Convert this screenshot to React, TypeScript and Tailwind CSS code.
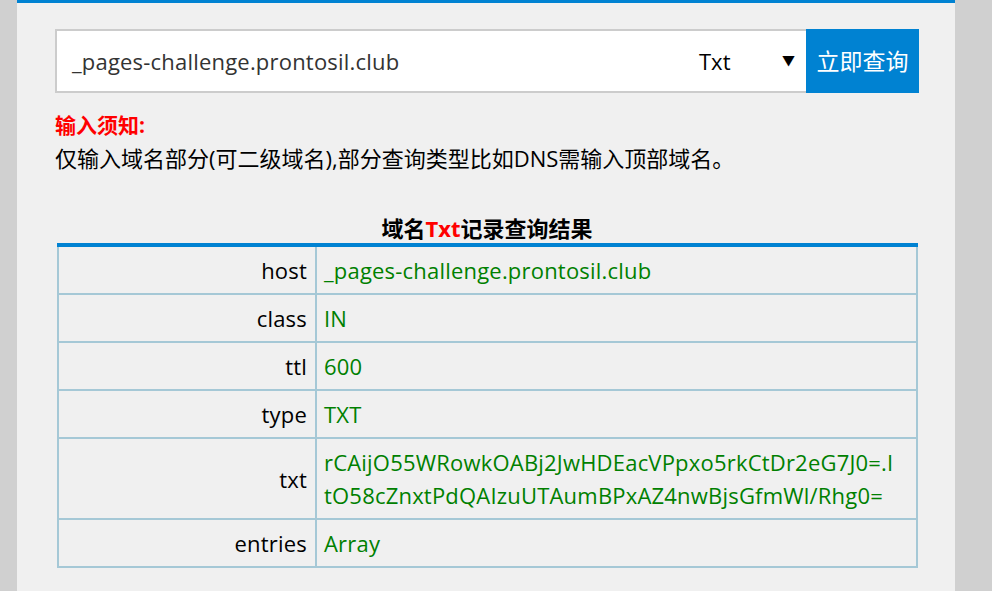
import React from 'react';

const rows: [string, React.ReactNode][] = [
    ['host', '_pages-challenge.prontosil.club'],
    ['class', 'IN'],
    ['ttl', '600'],
    ['type', 'TXT'],
    ['txt', <>rCAijO55WRowkOABj2JwHDEacVPpxo5rkCtDr2eG7J0=.I<br />tO58cZnxtPdQAIzuUTAumBPxAZ4nwBjsGfmWl/Rhg0=</>],
    ['entries', 'Array'],
];

const App = () => {
    return (
        <div className="flex min-h-[591px] bg-[#d0d0d0] text-[22px] text-black" style={{ fontFamily: '"Segoe UI", "Open Sans", "Noto Sans CJK SC", sans-serif' }}>
            <div className="w-[17px] shrink-0" />
            <div className="w-[938px] shrink-0 bg-[#f0f0f0] border-t-[3px] border-[#0082d2] pt-[26px] pl-[38px] pr-[36px] pb-6">
                <div className="flex h-[64px]">
                    <div className="flex-1 flex items-center bg-white border-2 border-r-0 border-[#cccccc] pl-[15px] text-[#333] tracking-[0.2px]">
                        _pages-challenge.prontosil.club
                    </div>
                    <div className="w-[112px] flex items-center justify-between bg-white border-y-2 border-[#cccccc] pl-[5px] pr-[11px]">
                        <span>Txt</span>
                        <span className="text-[13px]">▼</span>
                    </div>
                    <button className="w-[113px] bg-[#0082d2] text-white text-[23px]">立即查询</button>
                </div>
                <div className="mt-[16px] leading-[33px]">
                    <div className="text-[#ff0000] font-bold text-[21px]">输入须知:</div>
                    <div>仅输入域名部分(可二级域名),部分查询类型比如DNS需输入顶部域名。</div>
                </div>
                <div className="mt-[38px] text-center font-bold text-[22px] leading-[30px]">
                    域名<span className="text-[#ff0000]">Txt</span>记录查询结果
                </div>
                <table className="ml-[2px] w-[861px] border-collapse border-t-4 border-t-[#0082d2] tracking-[0.2px]">
                    <tbody>
                        {rows.map(([k, v]) => (
                            <tr key={k}>
                                <td className="w-[258px] border-2 border-[#a5c8d6] text-right pr-[8px] pt-[7px] pb-[6px] leading-[33px] align-middle">{k}</td>
                                <td className="border-2 border-[#a5c8d6] pl-[7px] pt-[7px] pb-[6px] leading-[33px] text-[#008000]">{v}</td>
                            </tr>
                        ))}
                    </tbody>
                </table>
            </div>
        </div>
    );
};

export default App;
